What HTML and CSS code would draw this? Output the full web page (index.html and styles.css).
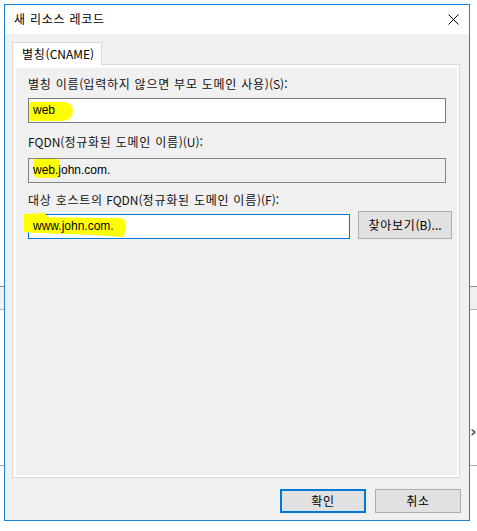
FILE: index.html
```html
<!DOCTYPE html>
<html lang="ko">
<head>
<meta charset="utf-8">
<title>새 리소스 레코드</title>
<link rel="stylesheet" href="styles.css">
</head>
<body>
<div class="desk">
  <div class="bg-strip"></div>
  <div class="bg-line"></div>
  <div class="bg-arrow">&#x203A;</div>
  <div class="window">
    <div class="titlebar">
      <span class="title k">새 리소스 레코드</span>
      <svg class="close" width="11" height="11" viewBox="0 0 11 11"><path d="M0.5 0.5 L10.5 10.5 M10.5 0.5 L0.5 10.5" stroke="#000" stroke-width="1" fill="none"/></svg>
    </div>
    <div class="body">
      <div class="tabs"><div class="tab"><span class="k">별칭</span>(CNAME)</div></div>
      <div class="panel">
        <div class="lbl"><span class="k">별칭 이름</span>(<span class="k">입력하지 않으면 부모 도메인 사용</span>)(S):</div>
        <div class="field f1"><span class="hl hl1"></span><span class="val">web</span></div>
        <div class="lbl l2">FQDN(<span class="k">정규화된 도메인 이름</span>)(U):</div>
        <div class="field f2 ro"><span class="hl hl2"></span><span class="val">web.john.com.</span></div>
        <div class="lbl l3"><span class="k">대상 호스트의</span> FQDN(<span class="k">정규화된 도메인 이름</span>)(F):</div>
        <div class="row">
          <div class="field f3 focus"><span class="hl hl3"></span><span class="val">www.john.com.</span></div>
          <button class="btn browse"><span class="k">찾아보기</span>(B)...</button>
        </div>
      </div>
      <div class="actions">
        <button class="btn act default"><span class="k">확인</span></button>
        <button class="btn act"><span class="k">취소</span></button>
      </div>
    </div>
  </div>
</div>
</body>
</html>
```
FILE: styles.css
```css
* { box-sizing: border-box; }
html, body { margin: 0; padding: 0; }
body {
  width: 477px;
  height: 531px;
  background: #fff;
  overflow: hidden;
  font-family: "Noto Sans CJK KR", "Noto Sans", sans-serif;
  font-size: 12px;
  color: #000;
}
.k { letter-spacing: 0.75px; }
.desk { position: relative; width: 477px; height: 531px; }
.bg-strip {
  position: absolute; left: 0; top: 286px; width: 477px; height: 24px;
  background: #f0f0f0;
  border-top: 1px solid #8c8c8c;
  border-bottom: 1px solid #b4b4b4;
}
.bg-line {
  position: absolute; left: 0; top: 465px; width: 477px; height: 1px;
  background: #a8a8a8;
}
.bg-arrow {
  position: absolute; left: 470px; top: 424px; font-size: 16px; line-height: 16px;
  color: #555; font-weight: bold; font-family: "DejaVu Sans", sans-serif;
}
.window {
  position: absolute;
  left: 4px; top: 4px;
  width: 466px; height: 517px;
  border: 1px solid #1883d7;
  background: #f0f0f0;
  display: flex; flex-direction: column;
}
.titlebar {
  height: 29px;
  background: #fff;
  display: flex; align-items: center; justify-content: space-between;
  padding: 0 10px 1px 9px;
  flex: none;
}
.title { font-size: 12px; line-height: 16px; }
.close { display: block; }
.body {
  flex: 1;
  display: flex; flex-direction: column;
  padding: 8px 9px 7px 7px;
}
.tabs { display: flex; flex: none; }
.tab {
  position: relative; z-index: 1;
  width: 90px; height: 23px;
  margin-bottom: -1px;
  background: #fff;
  border: 1px solid #d9d9d9; border-bottom: none;
  padding-left: 9px;
  line-height: 21px;
  white-space: nowrap;
}
.panel {
  flex: 1;
  border: 1px solid #d9d9d9;
  background: #f0f0f0;
  box-shadow: inset 3px 3px 0 #fff, inset -2px -2px 0 #fff;
  padding: 11px 13px 0 15px;
}
.lbl { line-height: 16px; height: 16px; white-space: nowrap; color: #111; }
.l2 { margin-top: 11px; }
.l3 { margin-top: 9px; }
.field {
  position: relative;
  height: 25px;
  border: 1px solid #7a7a7a;
  background: #fff;
  padding-left: 4px;
  line-height: 22px;
  white-space: nowrap;
  font-family: "Liberation Sans", "Noto Sans CJK KR", sans-serif;
}
.f1 { margin-top: 6px; }
.f2 { margin-top: 8px; }
.ro { background: #f0f0f0; border-color: #838383; }
.focus { border-color: #0078d7; }
.val { position: relative; }
.hl { position: absolute; background: #ffff00; }
.hl1 { left: 0; top: 3px; width: 44px; height: 19px; border-radius: 2px 10px 12px 3px; }
.hl2 { left: 4px; top: 0; width: 26px; height: 19px; border-radius: 1px 2px 3px 6px; }
.hl3 {
  left: -5px; top: -2px; width: 102px; height: 24px;
  clip-path: polygon(0 4%, 20% 0, 24% 18%, 97% 22%, 100% 40%, 98% 100%, 70% 92%, 8% 82%, 0 78%);
}
.row {
  display: flex; align-items: flex-end; gap: 8px;
  margin-top: 3px; margin-right: -6px;
}
.row .field { flex: 1; }
.btn {
  font-family: "Noto Sans CJK KR", "Noto Sans", sans-serif;
  font-size: 12px;
  color: #000;
  background: #e1e1e1;
  border: 1px solid #adadad;
  padding: 0;
  margin: 0;
  line-height: 16px;
  white-space: nowrap;
}
.browse { width: 94px; height: 28px; flex: none; }
.actions {
  flex: none;
  display: flex; justify-content: flex-end; gap: 9px;
  margin-top: 11px; margin-right: -1px;
}
.act { width: 86px; height: 24px; }
.default { border: 2px solid #0078d7; }
```
